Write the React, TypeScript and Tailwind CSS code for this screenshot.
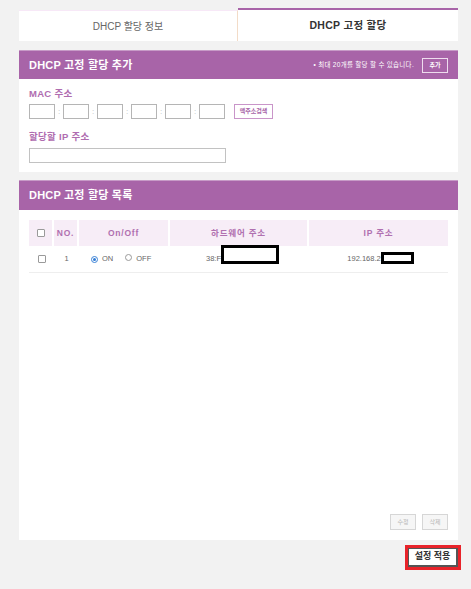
const purple = "bg-[#a864a8]";

const Check = () => (
    <span className="inline-block w-[8px] h-[8px] border border-[#9a9a9a] rounded-[1px] bg-white"></span>
);

const Radio = ({ on }: { on?: boolean }) => (
    <span className={"inline-flex items-center justify-center w-[7px] h-[7px] rounded-full border " + (on ? "border-[#3b82d6]" : "border-[#9a9a9a]")}>
        {on ? <span className="w-[3px] h-[3px] rounded-full bg-[#2f7bd6]"></span> : null}
    </span>
);

const MacBox = () => <div className="w-[26px] h-[15px] border border-[#b5b5b5] bg-white"></div>;

const Colon = () => <span className="w-[8px] text-center text-[8px] text-[#bbb]">:</span>;

const App = () => {
    return (
        <div className="w-[471px] h-[589px] bg-[#f2f2f2] pt-[8px] pl-[19px] pr-[13px] font-['Liberation_Sans','Noto_Sans_CJK_KR',sans-serif]">
            {/* tabs */}
            <div className="flex h-[33px]">
                <div className="w-[219px] mt-[2px] bg-white border-t border-[#f7e8f7] border-r border-r-[#f3dcc8] flex items-center justify-center text-[10px] text-[#666]">
                    DHCP 할당 정보
                </div>
                <div className="flex-1 bg-white border-t-[2px] border-[#a864a8] flex items-center justify-center text-[10.5px] font-bold text-[#333] tracking-[0.3px]">
                    DHCP 고정 할당
                </div>
            </div>

            {/* add section */}
            <div className="mt-[9px]">
                <div className={purple + " h-[29px] px-[10px] flex items-center justify-between border-t border-[#c79bc7]"}>
                    <span className="text-white font-bold text-[11px] tracking-[0.2px]">DHCP 고정 할당 추가</span>
                    <div className="flex items-center gap-[8px]">
                        <span className="text-white text-[6.5px] tracking-[0.3px]">• 최대 20개를 할당 할 수 있습니다.</span>
                        <span className="w-[26px] h-[15px] border border-[#eedcee] text-white text-[6px] font-bold flex items-center justify-center">추가</span>
                    </div>
                </div>
                <div className="bg-white h-[93px] px-[10px] pt-[9px]">
                    <div className="text-[9.5px] font-bold text-[#b06db0] leading-[12px] tracking-[0.3px]">MAC 주소</div>
                    <div className="flex items-center mt-[4px]">
                        <MacBox />
                        <Colon />
                        <MacBox />
                        <Colon />
                        <MacBox />
                        <Colon />
                        <MacBox />
                        <Colon />
                        <MacBox />
                        <Colon />
                        <MacBox />
                        <span className="ml-[9px] w-[39px] h-[15px] border border-[#c995c9] text-[6px] font-bold text-[#a864a8] flex items-center justify-center">맥주소검색</span>
                    </div>
                    <div className="mt-[12px] text-[9.5px] font-bold text-[#b06db0] leading-[12px] tracking-[0.3px]">할당할 IP 주소</div>
                    <div className="mt-[5px] w-[197px] h-[15px] border border-[#c2c2c2] bg-white"></div>
                </div>
            </div>

            {/* list section */}
            <div className="mt-[8px]">
                <div className={purple + " h-[30px] px-[10px] flex items-center border-t border-[#c79bc7]"}>
                    <span className="text-white font-bold text-[11px] tracking-[0.2px]">DHCP 고정 할당 목록</span>
                </div>
                <div className="bg-white h-[330px] px-[10px] pt-[10px] pb-[10px] flex flex-col justify-between">
                    <div>
                        <div className="flex h-[26px] bg-[#f7edf7] text-[8.5px] font-bold text-[#b070b0] tracking-[0.8px]">
                            <div className="w-[25px] flex items-center justify-center border-r-2 border-white"><Check /></div>
                            <div className="w-[25px] flex items-center justify-center border-r-2 border-white">NO.</div>
                            <div className="w-[91px] flex items-center justify-center border-r-2 border-white">On/Off</div>
                            <div className="w-[139px] flex items-center justify-center border-r-2 border-white">하드웨어 주소</div>
                            <div className="flex-1 flex items-center justify-center">IP 주소</div>
                        </div>
                        <div className="flex h-[27px] border-b border-[#eeeeee] text-[7.5px] text-[#666]">
                            <div className="w-[25px] flex items-center justify-center"><Check /></div>
                            <div className="w-[25px] flex items-center justify-center">1</div>
                            <div className="w-[91px] flex items-center pl-[12px] gap-[4px]">
                                <Radio on />
                                <span>ON</span>
                                <span className="ml-[8px]"><Radio /></span>
                                <span>OFF</span>
                            </div>
                            <div className="w-[139px] flex items-center justify-center pl-[6px]">
                                <span>38:F</span>
                                <span className="inline-block w-[58px] h-[19px] border-[3px] border-black bg-white -mt-[9px]"></span>
                            </div>
                            <div className="flex-1 flex items-center justify-center pl-[4px]">
                                <span>192.168.2</span>
                                <span className="inline-block w-[33px] h-[12px] border-[3px] border-black bg-white -mt-[2px]"></span>
                            </div>
                        </div>
                    </div>
                    <div className="flex justify-end gap-[6px]">
                        <span className="w-[26px] h-[16px] border border-[#d6d6d6] bg-[#f6f6f6] text-[6px] text-[#b5b5b5] flex items-center justify-center">수정</span>
                        <span className="w-[26px] h-[16px] border border-[#d6d6d6] bg-[#f6f6f6] text-[6px] text-[#b5b5b5] flex items-center justify-center">삭제</span>
                    </div>
                </div>
            </div>

            {/* apply */}
            <div className="flex justify-end mt-[5px] -mr-[3px]">
                <div className="border-[3px] border-[#e8232a]">
                    <div className="w-[50px] h-[19px] border border-[#555] border-b-2 border-r-2 bg-white flex items-center justify-center text-[9px] font-bold text-[#333]">
                        설정 적용
                    </div>
                </div>
            </div>
        </div>
    );
};

export default App;
